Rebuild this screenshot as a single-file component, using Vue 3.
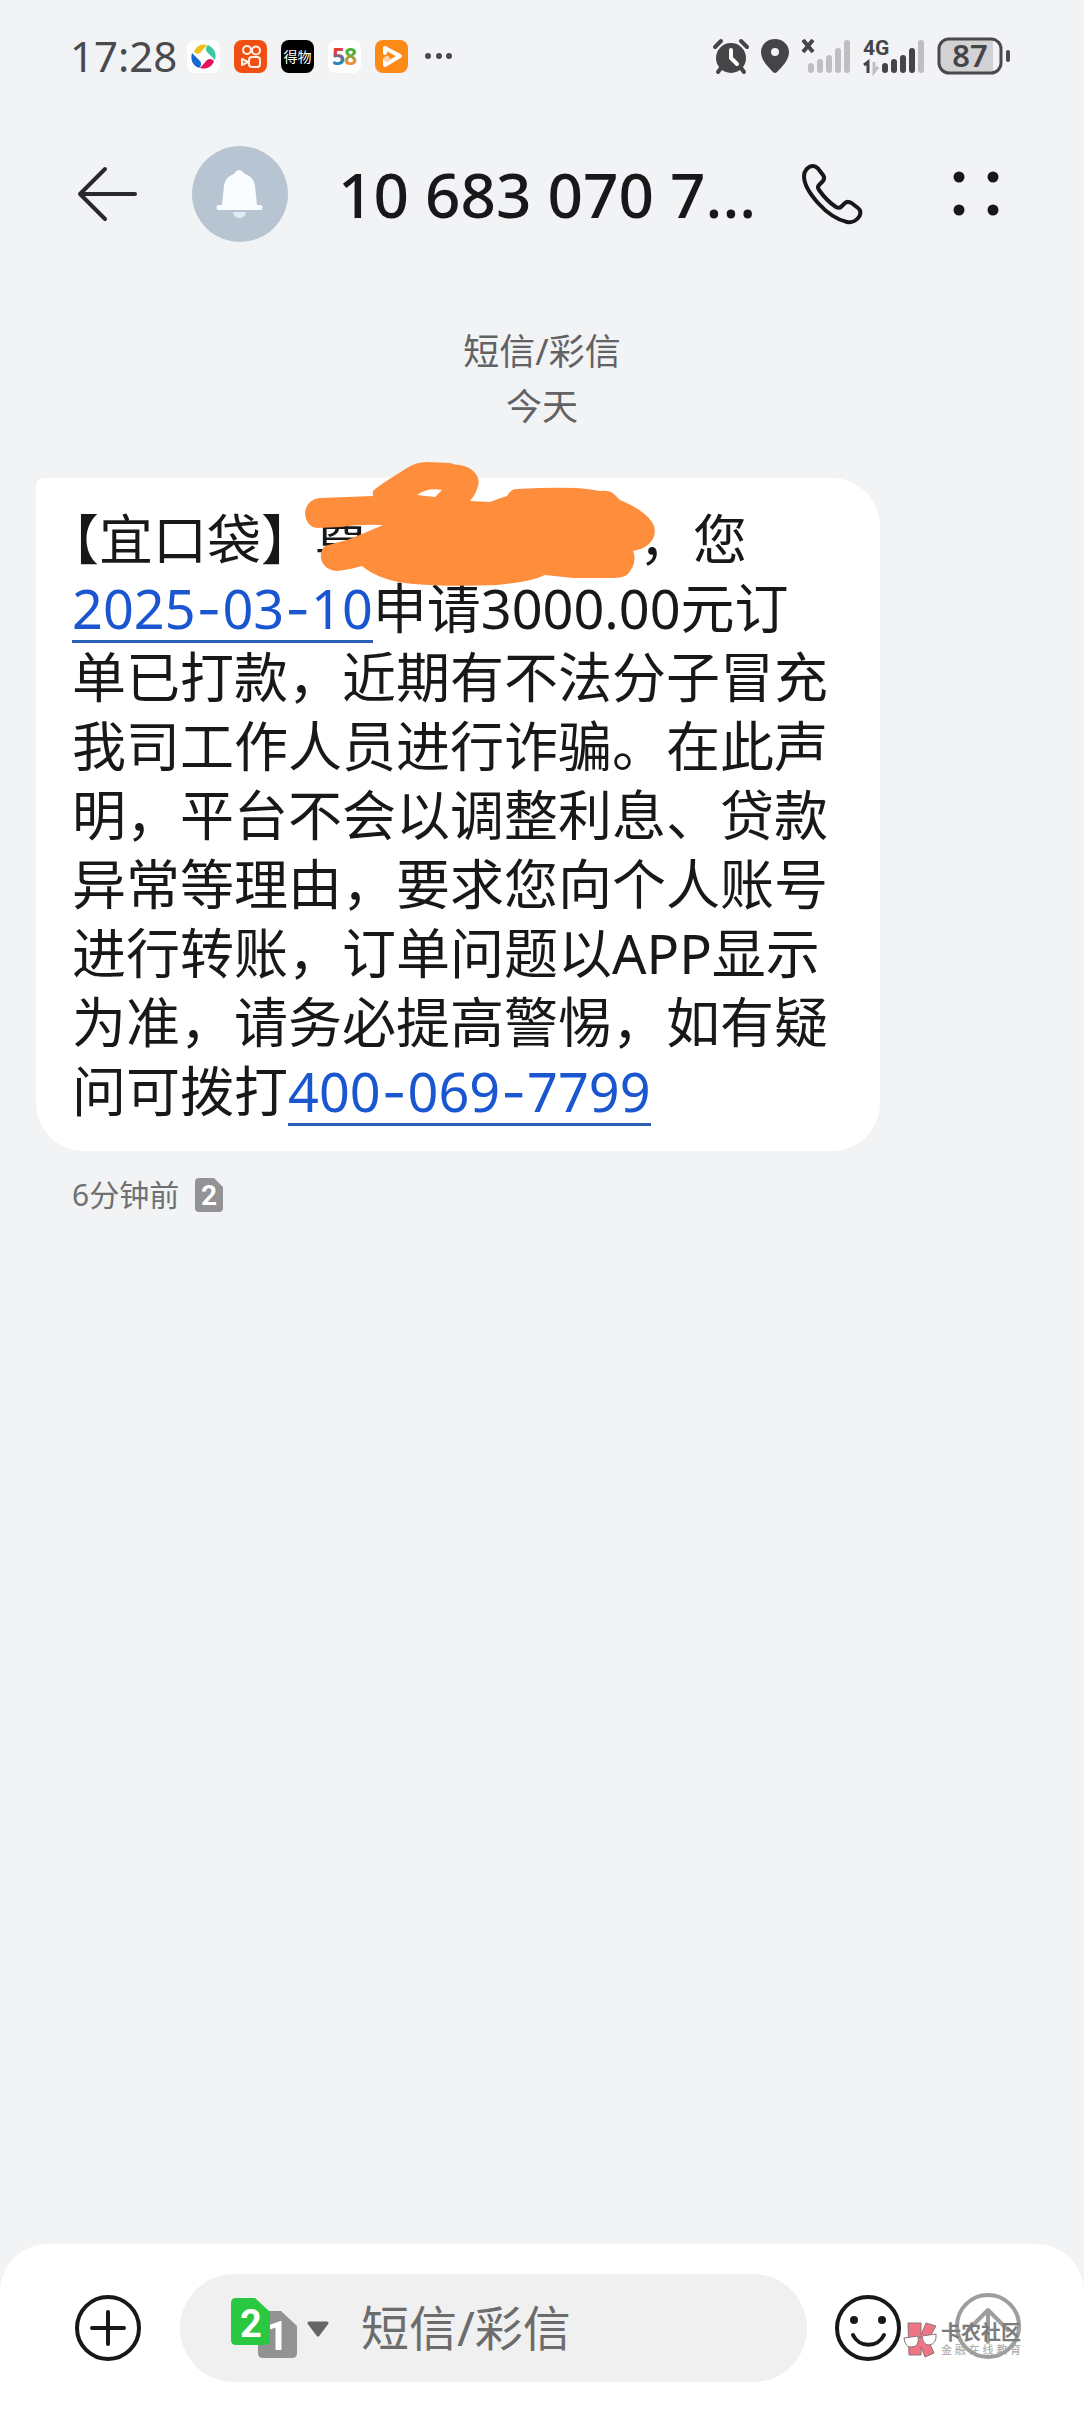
<script setup>
const smallBars = [
  { x: 2, h: 10 }, { x: 11, h: 14 }, { x: 20, h: 18 }, { x: 29, h: 25 }, { x: 38, h: 33 }
]
const sender = '10 683 070 7...'
const tagline = [...'金融在线教育']
</script>

<template>
  <div class="screen">
    <div class="status">
      <span class="time">17:28</span>
      <div class="apps">
        <svg class="app" viewBox="0 0 33 33">
          <rect width="33" height="33" rx="8" fill="#fff" />
          <path d="M7 12C9 6 14 3 20 5L13 13C11 14 9 14 7 12Z" fill="#f2c01d" />
          <path d="M21 5C27 8 30 13 28 20L20 12C18 9 19 7 21 5Z" fill="#3cc8a4" />
          <path d="M27 21C25 27 19 30 13 28L20 20C23 18 25 19 27 21Z" fill="#e5125d" />
          <path d="M12 28C6 26 3 20 5 13L13 21C15 24 14 26 12 28Z" fill="#1769d2" />
        </svg>
        <svg class="app" viewBox="0 0 33 33">
          <rect width="33" height="33" rx="8" fill="#f04e12" />
          <g fill="none" stroke="#fff3e6" stroke-width="2">
            <circle cx="13" cy="10" r="4" /><circle cx="22" cy="10.500" r="4" />
            <rect x="15" y="17" width="11" height="10" rx="3" />
            <path d="M8 19L14 22L8 25Z" stroke-linejoin="round" />
          </g>
        </svg>
        <svg class="app" viewBox="0 0 33 33">
          <rect width="33" height="33" rx="8" fill="#000" />
          <text x="16.500" y="22" text-anchor="middle" font-size="14" fill="#fff">得物</text>
        </svg>
        <svg class="app" viewBox="0 0 33 33">
          <rect width="33" height="33" rx="8" fill="#fff" />
          <defs>
            <linearGradient id="five" x1="0" y1="0" x2="0" y2="1"><stop offset=".4" stop-color="#d8413c" /><stop offset=".6" stop-color="#2c83b8" /></linearGradient>
            <linearGradient id="eight" x1="0" y1="0" x2="0" y2="1"><stop offset=".4" stop-color="#4caf3a" /><stop offset=".7" stop-color="#f2903a" /></linearGradient>
          </defs>
          <text class="heavy" x="4" y="25" font-size="23" fill="url(#five)">5</text>
          <text class="heavy" x="16" y="25" font-size="23" fill="url(#eight)">8</text>
        </svg>
        <svg class="app" viewBox="0 0 33 33">
          <rect width="33" height="33" rx="8" fill="#fb8a17" />
          <path d="M10 13V8L25 16L10 25V20" fill="none" stroke="#fff" stroke-width="4" stroke-linejoin="round" stroke-linecap="round" />
          <circle cx="12" cy="19" r="3" fill="#ffd2b0" />
        </svg>
      </div>
      <svg class="more" width="28" height="8" viewBox="0 0 28 8" fill="#4a4a4d"><circle cx="3" cy="4" r="3" /><circle cx="14" cy="4" r="3" /><circle cx="24" cy="4" r="3" /></svg>

      <div class="system">
        <svg width="36" height="36" viewBox="0 0 36 36">
          <circle cx="18" cy="20" r="15" fill="#454548" />
          <path d="M2 9L8 3M34 9L28 3M8 30L5 34M28 30L31 34" stroke="#454548" stroke-width="4" stroke-linecap="round" />
          <path d="M18 12V20L24 26" fill="none" stroke="#fff" stroke-width="4" stroke-linecap="round" stroke-linejoin="round" />
        </svg>
        <svg width="28" height="36" viewBox="0 0 28 36">
          <path d="M14 1C6 1 0 7 0 14C0 22 7 29 12 34Q14 36 16 34C21 29 28 22 28 14C28 7 22 1 14 1ZM14 10A4 4 0 1 1 14 18A4 4 0 1 1 14 10Z" fill="#454548" />
        </svg>
        <svg width="50" height="36" viewBox="0 0 50 36">
          <path d="M2 2L12 14M12 2L2 14" stroke="#454548" stroke-width="4" />
          <rect v-for="bar in smallBars" :key="bar.x" :x="bar.x + 5" :y="35 - bar.h" width="6" :height="bar.h" rx="3" fill="#bfbfc1" />
        </svg>
        <svg width="62" height="36" viewBox="0 0 62 36">
          <text class="net" x="0" y="17" font-size="21" fill="#454548">4G</text>
          <path d="M1 27L5 24V35" fill="none" stroke="#454548" stroke-width="3" />
          <path d="M11 24V34L15 29" fill="none" stroke="#bfbfc1" stroke-width="3" />
          <rect v-for="bar in smallBars" :key="bar.x" :x="bar.x + 17" :y="35 - bar.h" width="6" :height="bar.h" rx="3" :fill="bar.x > 30 ? '#bfbfc1' : '#454548'" />
        </svg>
        <svg width="74" height="38" viewBox="0 0 74 38">
          <path d="M12 3H56V35H12Q3 35 3 26V12Q3 3 12 3Z" fill="#d2d2d4" />
          <rect x="2" y="2" width="62" height="34" rx="10" fill="none" stroke="#4a4a4d" stroke-width="3" />
          <rect x="69" y="13" width="4" height="12" rx="2" fill="#4a4a4d" />
          <text class="level" x="33" y="30" text-anchor="middle" font-size="31" fill="#454548">87</text>
        </svg>
      </div>
    </div>

    <header class="header">
      <button class="icon" aria-label="返回">
        <svg width="64" height="60" viewBox="0 0 64 60" fill="none" stroke="#2a2a2c" stroke-width="4" stroke-linecap="round">
          <path d="M4 30H59M4 30L29 5M4 30L29 55" />
        </svg>
      </button>
      <svg class="avatar" viewBox="0 0 96 96">
        <circle cx="48" cy="48" r="48" fill="#b7c4d1" />
        <path d="M47 24C49 24 51 26 53 28C59 30 62 34 63 40L65 59H68A2 2 0 0 1 68 64H27A2 2 0 0 1 27 59H30L32 40C33 34 36 30 42 28C43 26 45 24 47 24Z" fill="#fafdff" />
        <path d="M41 66H54Q53 72 47 72Q42 72 41 66Z" fill="#dfecf5" />
      </svg>
      <h1 class="sender">{{ sender }}</h1>
      <button class="icon" aria-label="拨打电话">
        <svg width="60" height="60" viewBox="0 0 60 60" fill="none" stroke="#18181a" stroke-width="4" stroke-linejoin="round">
          <path d="M2 12C2 7 6 2 11 2C13 2 14.500 3 16 4.500L21 11C22.500 13 22.500 15 21 17L17 21C15.500 22.500 16 24.500 17 26C22 33 27 38.500 34 43C36 44 38 44 39.500 42.500L42 40C44 37.500 47 37.500 49.500 39L56 44C58.500 46 59 49 57.500 52C55 56.500 50 59 45 58C36 56 25 49 16 39C8 30 2 20 2 12Z" />
        </svg>
      </button>
      <button class="icon menu" aria-label="更多">
        <svg width="56" height="60" viewBox="0 0 56 60" fill="#18181a">
          <circle cx="11" cy="13" r="5.500" /><circle cx="45" cy="13" r="5.500" />
          <circle cx="11" cy="46" r="5.500" /><circle cx="45" cy="46" r="5.500" />
        </svg>
      </button>
    </header>

    <main class="thread">
      <div class="meta">
        <div>短信/彩信</div>
        <div>今天</div>
      </div>
      <p class="bubble"><span class="half">【</span>宜口袋】尊<span class="redacted"><svg class="scribble" width="360" height="130" viewBox="0 0 360 130"><path fill="#ff8e3c" fill-rule="evenodd" d="M5 57C5 48 10 41 20 40L73 38C73 36 72 34 74 32Q78 28 107 10Q116 4 127 4L150 5Q155 7 160 7C173 9 181 19 178 28Q176 36 170 43L190 44Q200 40 207 38Q211 31 217 31Q250 29 277 30Q290 31 300 33Q309 32 314 36L320 42Q344 52 352 64C359 75 353 90 333 93Q338 105 327 117Q322 120 313 120H273L245 117Q231 124 197 127Q150 129 113 126Q80 123 62 108Q48 112 37 113C20 112 17 95 25 88Q35 85 47 82Q65 75 83 67Q60 66 40 69L17 70Q7 69 5 57ZM117 37L135 39L142 32Q128 29 117 37Z" /></svg></span>，您<a class="link" href="#date">2025<i>-</i>03<i>-</i>10</a>申请3000.00元订单已打款，近期有不法分子冒充我司工作人员进行诈骗。在此声明，平台不会以调整利息、贷款异常等理由，要求您向个人账号进行转账，订单问题以APP显示为准，请务必提高警惕，如有疑问可拨打<a class="link" href="tel:4000697799">400<i>-</i>069<i>-</i>7799</a></p>
      <div class="stamp">
        <span>6分钟前</span>
        <svg width="28" height="34" viewBox="0 0 28 34">
          <path d="M4 0H19L28 9V30Q28 34 24 34H4Q0 34 0 30V4Q0 0 4 0Z" fill="#939395" />
          <text class="net" x="14" y="27" text-anchor="middle" font-size="28" fill="#fff">2</text>
        </svg>
      </div>
    </main>

    <footer class="composer">
      <button class="icon" aria-label="添加">
        <svg width="66" height="66" viewBox="0 0 66 66" fill="none" stroke="#18181a" stroke-width="4" stroke-linecap="round">
          <circle cx="33" cy="33" r="31" /><path d="M33 17V49M17 33H49" />
        </svg>
      </button>
      <div class="field">
        <button class="icon sim" aria-label="选择SIM卡">
          <svg width="98" height="60" viewBox="0 0 98 60">
            <path d="M32 13H50L66 28V55Q66 60 61 60H32Q27 60 27 55V18Q27 13 32 13Z" fill="#929292" />
            <text class="net" x="46" y="52" text-anchor="middle" font-size="41" fill="#fff">1</text>
            <path d="M5 0H24L39 14V42Q39 47 34 47H5Q0 47 0 42V5Q0 0 5 0Z" fill="#2ac840" />
            <text class="net" x="20" y="39" text-anchor="middle" font-size="38" fill="#fff">2</text>
            <path d="M78 25H96L87 37Z" fill="#666" stroke="#666" stroke-width="3" stroke-linejoin="round" />
          </svg>
        </button>
        <input class="input" type="text" placeholder="短信/彩信" aria-label="短信/彩信" />
      </div>
      <button class="icon" aria-label="表情">
        <svg width="66" height="66" viewBox="0 0 66 66" fill="none" stroke="#18181a" stroke-width="4" stroke-linecap="round">
          <circle cx="33" cy="33" r="31" /><path d="M18 40C24 53 43 53 49 40" />
          <g fill="#18181a" stroke="none"><circle cx="19" cy="25" r="4" /><circle cx="47" cy="25" r="4" /></g>
        </svg>
      </button>
      <div class="send">
        <button class="icon" aria-label="发送">
          <svg width="66" height="66" viewBox="0 0 66 66" fill="none" stroke="#9d9d9d" stroke-width="4" stroke-linecap="round" stroke-linejoin="round">
            <circle cx="33" cy="33" r="31" /><path d="M33 49V17M13 37L33 17L53 37" />
          </svg>
        </button>
        <div class="mark">
          <svg width="34" height="36" viewBox="0 0 34 36" stroke="#8a7478" stroke-width="1">
            <path d="M5 1H18V13L23 1L33 4L25 18L31 31L22 35L18 25V33H6Z" fill="#ef7585" />
            <path d="M1 16L15 14Q17 25 8 25Q2 25 1 16ZM19 14L33 12Q34 22 26 23Q20 23 19 14ZM15 15H19" fill="#fff" />
          </svg>
          <div class="words">
            <strong>卡农社区</strong>
            <div class="tagline"><span v-for="c in tagline" :key="c">{{ c }}</span></div>
          </div>
        </div>
      </div>
    </footer>
  </div>
</template>

<style>
body {
  margin: 0;
  background: #f1f3f5;
}
</style>

<style scoped>
.screen {
  display: flex;
  flex-direction: column;
  min-height: 100vh;
  color: #18181a;
  background: #f1f3f5;
  font-family: "Noto Sans", "Noto Sans CJK SC", sans-serif;
}
svg {
  display: block;
  flex: none;
  overflow: visible;
}
.icon {
  flex: none;
  padding: 0;
  border: 0;
  background: none;
}
.status {
  display: flex;
  align-items: center;
  height: 112px;
  padding: 0 73px 0 70px;
}
.time {
  color: #4a4a4d;
  font-size: 42px;
  line-height: 60px;
}
.apps {
  display: flex;
  gap: 14px;
  margin-left: 10px;
}
.app {
  width: 33px;
  height: 33px;
}
.more {
  margin-left: 17px;
}
.heavy,
.net,
.level {
  font-weight: 700;
}
.net {
  font-family: Roboto, sans-serif;
}
.level {
  font-weight: 600;
}
.system {
  display: flex;
  align-items: center;
  gap: 12px;
  margin-left: auto;
}
.header {
  display: flex;
  align-items: center;
  height: 164px;
  padding: 0 80px 0 76px;
}
.avatar {
  width: 96px;
  height: 96px;
  margin: 0 50px 0 52px;
}
.sender {
  flex: 1;
  margin: 0;
  overflow: hidden;
  font-size: 62px;
  font-weight: 500;
  line-height: 88px;
  white-space: nowrap;
}
.menu {
  margin-left: 86px;
}
.thread {
  flex: 1;
  padding: 48px 36px;
}
.meta {
  color: #626264;
  font-size: 36px;
  line-height: 55px;
  text-align: center;
}
.bubble {
  margin: 44px 168px 0 0;
  padding: 27px 44px 25px 36px;
  border-radius: 8px 48px 48px 48px;
  background: #fff;
  font-size: 54px;
  line-height: 69px;
}
.half {
  font-feature-settings: "halt";
}
.redacted {
  position: relative;
  display: inline-block;
  width: 270px;
  height: 40px;
}
.scribble {
  position: absolute;
  top: -62px;
  left: -69px;
}
.link {
  background: linear-gradient(#2b5fb5, #2b5fb5) 0 calc(100% - 2px) / 100% 3px no-repeat;
  color: #1a56d0;
  text-decoration: none;
  white-space: nowrap;
}
.link i {
  padding: 0 1px;
  font-family: Inter, sans-serif;
  font-style: normal;
  line-height: 1;
}
.stamp {
  display: flex;
  align-items: center;
  gap: 16px;
  margin-top: 22px;
  padding-left: 36px;
  color: #707072;
  font-size: 30px;
  line-height: 44px;
}
.composer {
  display: flex;
  align-items: center;
  padding: 30px 63px 30px 75px;
  border-radius: 48px 48px 0 0;
  background: #fff;
}
.field {
  display: flex;
  flex: 1;
  align-items: center;
  gap: 32px;
  min-width: 0;
  height: 108px;
  margin: 0 28px 0 39px;
  padding: 0 51px;
  box-sizing: border-box;
  border-radius: 54px;
  background: #f0f0f0;
}
.input {
  flex: 1;
  min-width: 0;
  padding: 0;
  border: 0;
  outline: 0;
  background: none;
  font: inherit;
  font-size: 48px;
  line-height: 72px;
}
.input::placeholder {
  color: #6c6c6c;
  opacity: 1;
}
.send {
  position: relative;
  margin-left: 54px;
}
.mark {
  position: absolute;
  top: 29px;
  right: 0;
  display: flex;
  gap: 4px;
}
.words {
  width: 80px;
  color: #7b7b7b;
}
.words strong {
  display: block;
  font-size: 20px;
  line-height: 22px;
  white-space: nowrap;
}
.tagline {
  display: flex;
  justify-content: space-between;
  color: #a3a3a3;
  font-size: 11px;
  line-height: 12px;
}
</style>
